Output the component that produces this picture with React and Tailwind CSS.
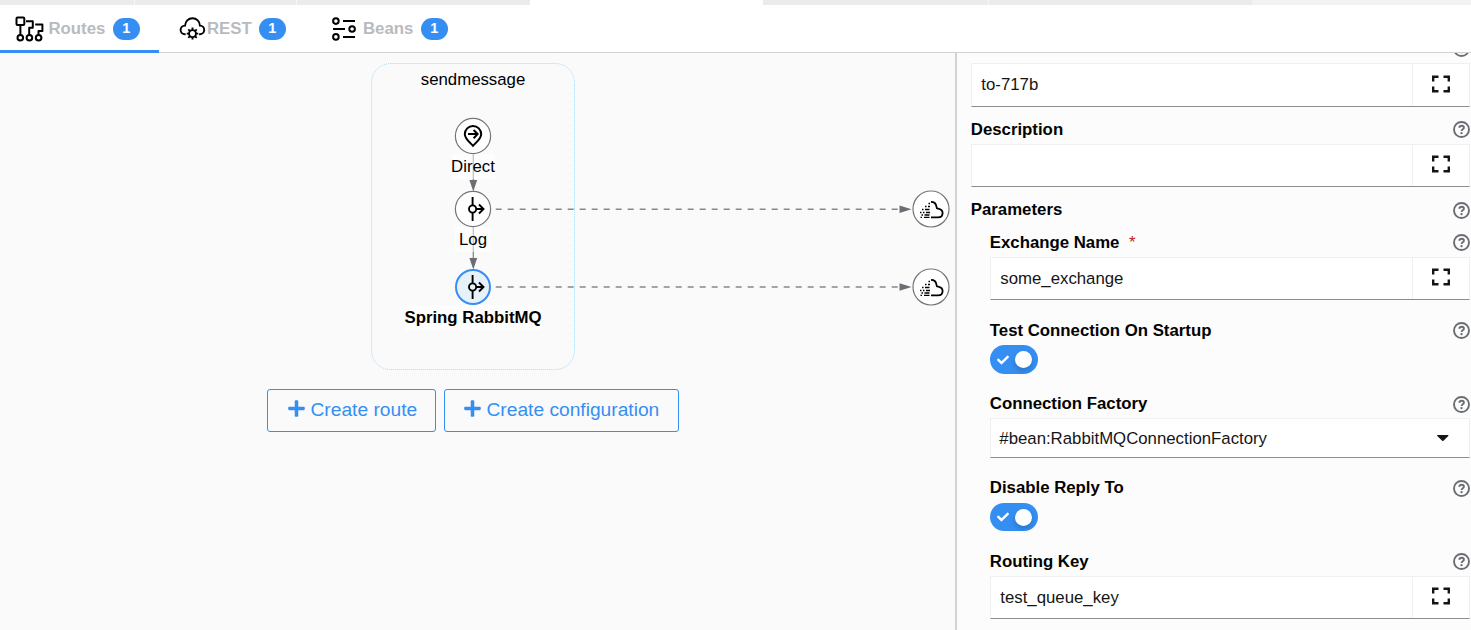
import React from "react";
import { FaCheck, FaPlus } from "react-icons/fa";

function RoutesIcon() {
  return (
    <svg width="30" height="26" viewBox="15 16 30 26" fill="none" stroke="#000" strokeWidth="2" strokeLinejoin="round">
      <rect x="16.5" y="17.6" width="7.8" height="7.4" rx="1" />
      <path d="M20.4 25V34.8M26 21.2h6.8v6.6h-3.6v7M35.2 24.6h7.2v6.4h-3.9v3.8" />
      <circle cx="20.3" cy="37.8" r="2.8" />
      <circle cx="29.4" cy="37.8" r="2.8" />
      <circle cx="38.6" cy="37.8" r="2.8" />
    </svg>
  );
}

function RestIcon() {
  return (
    <svg width="27" height="26" viewBox="179 16 27 26" fill="none" stroke="#000" strokeWidth="1.9">
      <path d="M185.6 34.2h-.6a4.300 4.300 0 0 1-.2-8.600h.3a7.400 7.400 0 0 1 14.800 0h.2a4.300 4.300 0 0 1-.4 8.600h-.6" />
      <circle cx="192.5" cy="33.6" r="3.5" />
      <path d="M192.5 30v-2.4M192.5 37.2v2.4M188.9 33.6h-2.2M196.1 33.6h2.2M190 31.1l-1.7-1.7M195 31.1l1.7-1.7M190 36.1l-1.7 1.7M195 36.1l1.7 1.7" />
    </svg>
  );
}

function BeansIcon() {
  return (
    <svg width="26" height="26" viewBox="331 16 26 26" fill="none" stroke="#000" strokeWidth="2">
      <circle cx="335.9" cy="21.1" r="2.8" />
      <circle cx="352.1" cy="29" r="2.8" />
      <circle cx="335.9" cy="36.9" r="2.8" />
      <path d="M343 21.1h12M333 29h12M343 36.9h12" />
    </svg>
  );
}

function HelpIcon() {
  return (
    <svg className="shrink-0" width="17" height="17" viewBox="0 0 17 17" fill="none" stroke="#6a6e73">
      <circle cx="8.500" cy="8.500" r="7.500" strokeWidth="1.9" />
      <path d="M6.200 6.800c.3-1.400 1.200-2 2.400-2s2.300.7 2.300 1.900c0 1.600-2.300 1.500-2.300 3.200" strokeWidth="1.900" />
      <circle cx="8.500" cy="12.100" r="1.200" fill="#6a6e73" stroke="none" />
    </svg>
  );
}

function Badge() {
  return (
    <span className="flex h-[22px] w-[27px] items-center justify-center rounded-full bg-[#358ff2] pr-[0.5px] pb-px text-[14.4px] leading-none font-bold text-white">
      1
    </span>
  );
}

const label = "text-[16.8px] font-bold text-[#b8bbbe]";

function Tabs() {
  return (
    <nav className="flex h-12 shrink-0 border-b border-[#d2d2d2] bg-white">
      <div className="-mb-px flex w-[159px] items-center border-b-[3px] border-[#358ff2] pt-[2px] pl-[15px]">
        <RoutesIcon />
        <span className={label + " ml-[3.5px] w-[64.5px]"}>Routes</span>
        <Badge />
      </div>
      <div className="flex w-[153px] items-center pl-5">
        <RestIcon />
        <span className={label + " ml-px w-[52px]"}>REST</span>
        <Badge />
      </div>
      <div className="flex items-center pl-[19px]">
        <BeansIcon />
        <span className={label + " ml-[6px] w-[58px]"}>Beans</span>
        <Badge />
      </div>
    </nav>
  );
}

function StepGlyph({ y }) {
  return (
    <g fill="none" stroke="#000" strokeWidth="1.9">
      <path d={`M472.6 ${y - 12}v8.4M472.6 ${y + 3.6}v8.4M476.3 ${y}h7.2M479 ${y - 4.5}l4.5 4.5l-4.5 4.5`} />
      <circle cx="472.6" cy={y} r="3.6" />
    </g>
  );
}

function CloudNode({ y }) {
  return (
    <g>
      <circle cx="931" cy={y} r="18" fill="#fff" stroke="#72767b" strokeWidth="1.2" />
      <path
        d={`M931 ${y - 7.2}c3.2 0 5 1.7 5.4 4.6c0 1.5.4 2 1.7 2.2c2.8.5 4.500 2.200 4.500 4.400c0 2.800-1.800 4.400-4.600 4.400H931`}
        fill="none" stroke="#000" strokeWidth="1.8"
      />
      <path
        d={`M928.5 ${y - 5.5}h1.5M925 ${y - 2.5}h1.5M928 ${y - 2.5}h2M922 ${y + 0.5}h1.5M925 ${y + 0.500}h4.500M920 ${y + 3.5}h1.500M923 ${y + 3.5}h1.500M926 ${y + 3.5}h4M921.500 ${y + 6}h1.500M924.500 ${y + 6}h5M920.500 ${y + 8.300}h1.500M924 ${y + 8.300}h5.500`}
        fill="none" stroke="#000" strokeWidth="1.3"
      />
    </g>
  );
}

function Edge({ y }) {
  return (
    <g>
      <path d={`M495.7 ${y}H899`} stroke="#85888d" strokeWidth="1.6" strokeDasharray="6 6" />
      <path d={`M899.500 ${y - 3.800}L911.500 ${y}L899.500 ${y + 3.800}z`} fill="#6a6e73" />
    </g>
  );
}

function Diagram() {
  return (
    <svg className="block" width="955" height="577" viewBox="0 53 955 577">
      <rect x="371.5" y="63.5" width="203" height="306" rx="19" fill="none" stroke="#a9d9f0" strokeWidth="1" strokeDasharray="1 1" />
      <path d="M473.3 154v27M473.3 227v31" stroke="#85888d" strokeWidth="1.300" />
      <path d="M469.4 180h7.8l-3.9 11.5zM469.4 258h7.8l-3.9 11.5z" fill="#6a6e73" />
      <Edge y={209.2} />
      <Edge y={287} />
      <circle cx="473" cy="136" r="17.6" fill="#fff" stroke="#72767b" strokeWidth="1.2" />
      <circle cx="473" cy="209" r="17.6" fill="#fff" stroke="#72767b" strokeWidth="1.2" />
      <circle cx="473" cy="287" r="17" fill="#e7f1fa" stroke="#358ff2" strokeWidth="2" />
      <path d="M473 145.800c-3.400-3.600-8.200-7.200-8.200-11.600a8.200 8.200 0 0 1 16.400 0c0 4.400-4.800 8-8.200 11.600z" fill="none" stroke="#000" strokeWidth="2" />
      <path d="M468 134.100h9.400M473.600 130l4 4.100l-4 4.100" fill="none" stroke="#000" strokeWidth="2" />
      <StepGlyph y={209} />
      <StepGlyph y={287} />
      <CloudNode y={209} />
      <CloudNode y={287} />
    </svg>
  );
}

const nodeLabel = "absolute flex h-[25px] -translate-x-1/2 items-center whitespace-nowrap pt-[2px] text-[16.8px] leading-none text-black";
const action = "flex h-[43px] items-center rounded-[3px] border border-[#358ff2] pb-px text-[19.2px] leading-none text-[#358ff2]";

function Canvas() {
  return (
    <main className="relative w-[955px] shrink-0 overflow-hidden bg-[#fafafa]">
      <Diagram />
      <span className={nodeLabel + " top-[14px] left-[473px]"}>sendmessage</span>
      <span className={nodeLabel + " top-[101px] left-[473px] bg-white/50"}>Direct</span>
      <span className={nodeLabel + " top-[174px] left-[473px] bg-white/50 px-1"}>Log</span>
      <span className={nodeLabel + " top-[252px] left-[473px] bg-white/50 font-bold"}>Spring RabbitMQ</span>
      <div className="absolute top-[336px] left-[267px] flex gap-2">
        <button className={action + " w-[169px] pl-[18.500px]"}>
          <FaPlus size={19} className="mr-[5px] mb-[4px]" />
          Create route
        </button>
        <button className={action + " w-[235px] pl-[17.500px]"}>
          <FaPlus size={19} className="mr-[5px] mb-[4px]" />
          Create configuration
        </button>
      </div>
    </main>
  );
}

function FieldLabel({ text, size, required }) {
  return (
    <div className={"flex shrink-0 items-center justify-between text-[16.8px] leading-[20px] font-bold text-[#030303] " + size}>
      <span className="-ml-[0.2px]">
        {text}
        {required && <span className="ml-[9.500px] font-normal text-[#c9190b]">*</span>}
      </span>
      <HelpIcon />
    </div>
  );
}

const box = "flex shrink-0 border border-[#f0f0f0] border-b-[#8a8d90] bg-white text-[16.8px] text-[#151515]";

function TextField({ value, size }) {
  return (
    <div className={box + " " + size}>
      <div className="flex flex-1 items-center pl-[9.300px]">{value}</div>
      <div className="flex w-[57px] items-center justify-center border-l border-[#f0f0f0] pb-[3px]">
        <svg width="18" height="18" viewBox="0 0 18 18" fill="none" stroke="#151515" strokeWidth="2.4">
          <path d="M1.200 6.500V1.700H6.500M11.500 1.700h5.300v4.800M16.800 11.500v4.800h-5.300M6.500 16.300H1.200v-4.800" />
        </svg>
      </div>
    </div>
  );
}

function Toggle({ size }) {
  return (
    <div className={"flex w-12 shrink-0 items-center justify-between rounded-full bg-[#358ff2] pr-[6px] pl-[7px] " + size}>
      <FaCheck size={12} className="text-white" />
      <span className="h-[17px] w-[17px] rounded-full bg-white shadow-[0_3px_6px_rgba(0,0,0,0.2)]" />
    </div>
  );
}

function Properties() {
  return (
    <aside className="flex flex-1 flex-col overflow-hidden border-l-2 border-[#d2d2d2] bg-[#fcfcfc] pr-px pl-[14px]">
      <div className="flex h-[10px] shrink-0 items-end justify-end pb-[6px]">
        <HelpIcon />
      </div>
      <TextField value="to-717b" size="h-[44px]" />
      <FieldLabel text="Description" size="h-[37px] pt-[8px]" />
      <TextField value="" size="h-[43px]" />
      <FieldLabel text="Parameters" size="h-[46px]" />
      <section className="flex flex-col pl-[19px]">
        <FieldLabel text="Exchange Name" size="h-[24px] pb-[5px]" required />
        <TextField value="some_exchange" size="h-[43px]" />
        <FieldLabel text="Test Connection On Startup" size="h-[45px] pt-[16px]" />
        <Toggle size="h-[29px]" />
        <FieldLabel text="Connection Factory" size="h-[44px] pt-[16px]" />
        <div className={box + " h-[40px] items-center justify-between pt-[2px] pr-[20.500px] pl-[8.300px]"}>
          #bean:RabbitMQConnectionFactory
          <svg width="12" height="6" viewBox="0 0 12 6" className="mb-[2px]">
            <path d="M.5 0h10.500q.7.2.3.900L6.500 5.700q-.700.500-1.300 0L.3.900Q0 .2.500 0z" fill="#151515" />
          </svg>
        </div>
        <FieldLabel text="Disable Reply To" size="h-[45px] pt-[15px]" />
        <Toggle size="h-[28px]" />
        <FieldLabel text="Routing Key" size="h-[45px] pt-[16px]" />
        <TextField value="test_queue_key" size="h-[43px]" />
      </section>
    </aside>
  );
}

export default function App() {
  return (
    <div className="flex h-[630px] w-[1471px] flex-col overflow-hidden bg-white font-['Liberation_Sans',sans-serif]">
      <div className="flex h-[5px] shrink-0">
        <div className="w-[135px] border-r border-[#f7f7f7] bg-[#ebebeb]" />
        <div className="w-[162px] border-r border-[#f7f7f7] bg-[#ebebeb]" />
        <div className="w-[233px] bg-[#ebebeb]" />
        <div className="w-[233px] bg-white" />
        <div className="w-[226px] border-r border-[#f7f7f7] bg-[#ebebeb]" />
        <div className="w-[263px] bg-[#ebebeb]" />
        <div className="flex-1 bg-[#f2f2f2]" />
      </div>
      <Tabs />
      <div className="flex min-h-0 flex-1">
        <Canvas />
        <Properties />
      </div>
    </div>
  );
}
